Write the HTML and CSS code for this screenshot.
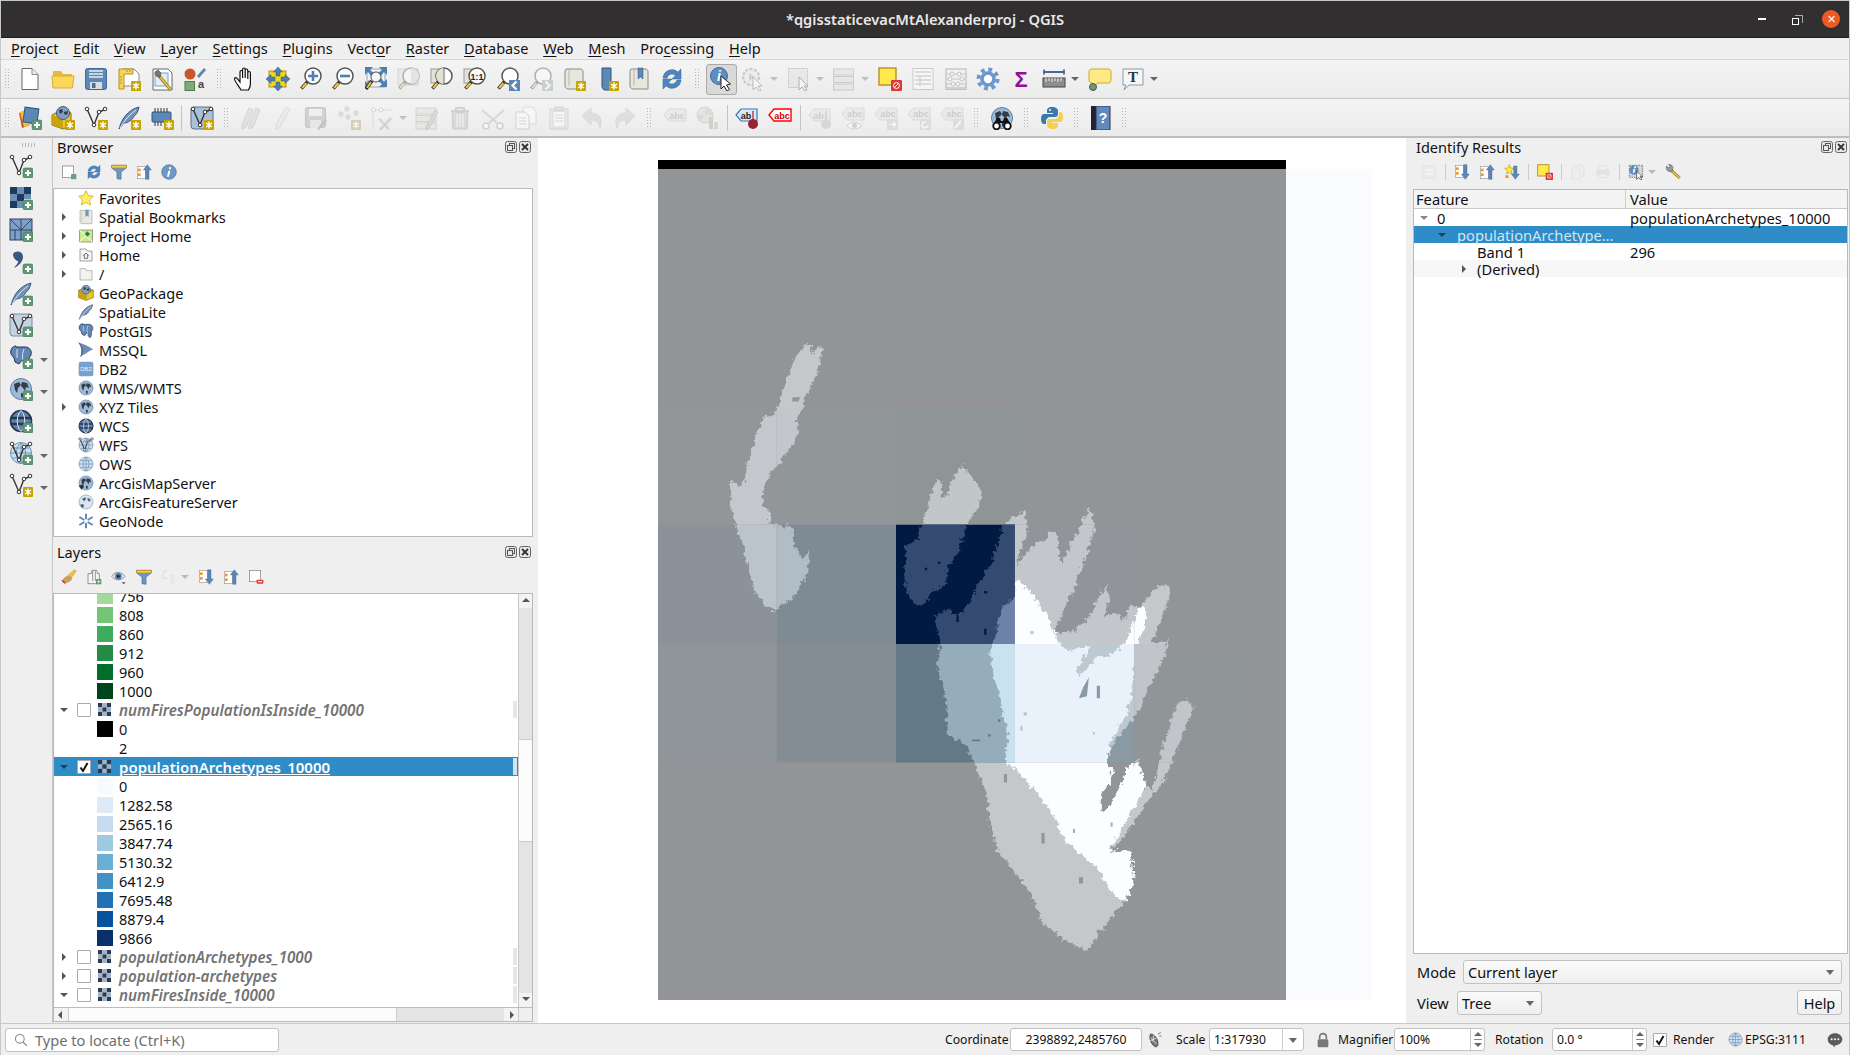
FILE: index.html
```html
<!DOCTYPE html>
<html lang="en">
<head>
<meta charset="utf-8">
<title>QGIS</title>
<link rel="stylesheet" href="styles.css">
</head>
<body>
<svg class="defs" width="0" height="0" aria-hidden="true">
<defs>
<g id="bs"><rect x="14" y="14" width="10" height="10" rx="1" fill="#c9a300"/><path d="M19 15.500v7M16 17l6 4M22 17l-6 4" stroke="#fff" stroke-width="1.500"/></g>
<g id="bp"><rect x="14" y="14" width="10" height="10" rx="2" fill="#5f9a72" stroke="#3e7a52" stroke-width=".6"/><path d="M19 16v6M16 19h6" stroke="#fff" stroke-width="2"/></g>
<g id="mag"><path d="M9 14 2.500 21.500" stroke="#111" stroke-width="3.400"/><path d="M7.500 16 3 21" stroke="#f2c438" stroke-width="2.400"/><circle cx="14" cy="9" r="8" fill="#fff" fill-opacity=".85" stroke="#555" stroke-width="1.500"/></g>
<g id="vv"><path d="M3 3l7 16 5-13 7-3" fill="none" stroke="#333" stroke-width="1.400"/><circle cx="3" cy="3" r="1.800" fill="#fff" stroke="#333"/><circle cx="10" cy="19" r="1.800" fill="#fff" stroke="#333"/><circle cx="15" cy="6" r="1.800" fill="#fff" stroke="#333"/><circle cx="21" cy="3" r="1.800" fill="#fff" stroke="#333"/></g>
<g id="glb"><circle cx="12" cy="12" r="10.500" fill="#9dbbd9" stroke="#5e7f9f"/><path d="M5 7l5-2 2 3-3 3-1 5-2-3zM13 5l5 1 2 5-3-1-1 4-2-3-2-2zM12 16l3 1-1 4-2-1z" fill="#333c48"/></g>
<g id="grid"><circle cx="12" cy="12" r="10.500" fill="#cfe0f0" stroke="#6e90b4"/><path d="M1.500 12h21M12 1.500v21M3.500 7h17M3.500 17h17M12 1.500c-6 5-6 16 0 21M12 1.500c6 5 6 16 0 21" fill="none" stroke="#6e90b4"/></g>
<g id="wcs"><circle cx="12" cy="12" r="10.500" fill="#5d82ab" stroke="#26374f" stroke-width="1.600"/><path d="M1.500 9h21M1.500 15h21" stroke="#26374f" stroke-width="2.400"/><path d="M12 1.500c-5 5-5 16 0 21M12 1.500c5 5 5 16 0 21" fill="none" stroke="#dfe8f2"/></g>
<g id="plume"><path d="M2 23C5 12 11 4 22 1c-1 5-3 8-6 10 1 1-4 6-9 6z" fill="#7492b8" stroke="#39587f"/><path d="M3 22C8 14 12 9 19 4" stroke="#dce6f2" fill="none"/></g>
<g id="eleph"><path d="M7 2h9c5 0 7 4 6 8l-2 3v6l-2 3-3-3v-4l-3 1-2 3-4-2-1-4-3-4c-1-4 1-8 5-8z" fill="#5f86b4" stroke="#26374f"/><path d="M8 4v9M15 4c-2 5-2 9 0 14" stroke="#d9e5f1" fill="none"/></g>
</defs>
<symbol id="new" viewBox="0 0 24 24"><path d="M4 1.500h10l6 6v15H4z" fill="#fff" stroke="#666"/><path d="M14 1.500v6h6" fill="#eee" stroke="#888"/></symbol>
<symbol id="open" viewBox="0 0 24 24"><path d="M2 8V4h8l2 3h9v3H2z" fill="#e7b93c"/><path d="M2 21 1 9h22l-1.500 12z" fill="#fbd75b" stroke="#d9ad30"/></symbol>
<symbol id="save" viewBox="0 0 24 24"><rect x="1.500" y="1.500" width="21" height="21" rx="2" fill="#5d87b5" stroke="#3f6a98"/><path d="M5 4h14M5 7h14M5 10h14" stroke="#e7eef5" stroke-width="1.400"/><rect x="6" y="15" width="12" height="7" fill="#d8dde2"/><rect x="8" y="16" width="3.500" height="5" fill="#4d6f94"/></symbol>
<symbol id="newlayout" viewBox="0 0 24 24"><path d="M6 2h11l5 5v12H6z" fill="#fff" stroke="#888"/><path d="M2 2h14v5H7v15H2z" fill="#f6d55c" stroke="#b98f1e"/><path d="M3 10h2M3 13h2M3 16h2M10 3v2M13 3v2" stroke="#b98f1e"/><use href="#bs"/></symbol>
<symbol id="layoutmgr" viewBox="0 0 24 24"><path d="M3 2h15l4 4v17H3z" fill="#fff" stroke="#666"/><rect x="5" y="6" width="13" height="13" fill="#e4ecf5" stroke="#7ba1c9"/><path d="M9 9l12 14" stroke="#8f7a2a" stroke-width="3.400"/><path d="M10 10l11 13" stroke="#e3c44a" stroke-width="1.800"/><path d="M5 5l3-2 3 3-1 4-4-1z" fill="#777" stroke="#444" stroke-width=".6"/></symbol>
<symbol id="stylemgr" viewBox="0 0 24 24"><circle cx="7" cy="7" r="5.500" fill="#c8552b"/><rect x="2" y="14.500" width="9.500" height="9" fill="#7fab7a" stroke="#4f7b4a"/><path d="M15 10l7-8" stroke="#5d87b5" stroke-width="2.800"/></symbol>
<symbol id="pan" viewBox="0 0 24 24"><path d="M8 23C6 19 2 15 1.500 12c0-1.800 2-1.800 3 0L7 15V5c0-2 2.600-2 2.600 0v6-8.500c0-2 2.600-2 2.600 0V11V3.500c0-2 2.600-2 2.600 0V12V6c0-2 2.600-2 2.600 0v11c0 3-1 4-2 6z" fill="#fff" stroke="#111" stroke-width="1.200"/></symbol>
<symbol id="panselect" viewBox="0 0 24 24"><rect x="3" y="4" width="17" height="16" fill="#f5d90a" stroke="#b98f1e"/><g fill="#4f7fb0" stroke="#2e5c8c" stroke-width=".5"><path d="M12 0l4.500 5H14v4h-4V5H7.500z"/><path d="M12 24l4.500-5H14v-4h-4v4H7.500z"/><path d="M0 12l5-4.500V10h4v4H5v2.500z"/><path d="M24 12l-5-4.500V10h-4v4h4v2.500z"/></g></symbol>
<symbol id="zoomin" viewBox="0 0 24 24"><use href="#mag"/><path d="M9 9h10M14 4v10" stroke="#4f7fb0" stroke-width="2.600"/></symbol>
<symbol id="zoomout" viewBox="0 0 24 24"><use href="#mag"/><path d="M9 9h10" stroke="#4f7fb0" stroke-width="2.600"/></symbol>
<symbol id="zoomfull" viewBox="0 0 24 24"><rect x="3" y="2" width="18" height="18" fill="#eef0f2" stroke="#9aa"/><g fill="#4f7fb0"><path d="M1 0h8L6 3l4 3-3 3-3-4-3 3z"/><path d="M23 0h-8l3 3-4 3 3 3 3-4 3 3z"/><path d="M23 20h-8l3-3-4-3 3-3 3 4 3-3z"/><path d="M1 20h6l-2-2 3-3-3-2-2 3-2-2z"/></g><path d="M8 14 2 22" stroke="#111" stroke-width="3.200"/><path d="M7 15l-4 6" stroke="#f2c438" stroke-width="2.200"/><circle cx="12" cy="10" r="5" fill="#fff" fill-opacity=".5" stroke="#555"/></symbol>
<symbol id="zoomlayer" viewBox="0 0 24 24"><rect x="1" y="2" width="20" height="16" fill="#e0e0d0" stroke="#aaa"/><use href="#mag"/><path d="M14 1a8 8 0 0 1 0 16z" fill="#d5d5c5"/></symbol>
<symbol id="zoomsel" viewBox="0 0 24 24"><rect x="1" y="2" width="14" height="14" fill="#e3e3d5" stroke="#999"/><use href="#mag"/><path d="M14 1a8 8 0 0 0 0 16z" fill="#e2e2d2"/><path d="M14 1v16" stroke="#777"/></symbol>
<symbol id="zoomnative" viewBox="0 0 24 24"><rect x="1" y="2" width="12" height="14" fill="#e3e3d5" stroke="#999"/><use href="#mag"/></symbol>
<symbol id="zoomlast" viewBox="0 0 24 24"><use href="#mag"/><rect x="13" y="13" width="11" height="11" fill="#5d87b5"/><path d="M20.500 14.500l-4 4 4 4" fill="none" stroke="#fff" stroke-width="2.200"/></symbol>
<symbol id="zoomnext" viewBox="0 0 24 24"><use href="#mag"/><rect x="13" y="13" width="11" height="11" fill="#8aa"/><path d="M16.500 14.500l4 4-4 4" fill="none" stroke="#fff" stroke-width="2.200"/></symbol>
<symbol id="bmnew" viewBox="0 0 24 24"><path d="M4 2h14c2 0 3 1 3 3v17H7c-2 0-4-1-4-3V4z" fill="#e8e6dd" stroke="#8a8a86"/><path d="M7 2v17" stroke="#b8b8b0"/><use href="#bs"/></symbol>
<symbol id="bmshow" viewBox="0 0 24 24"><path d="M7 1h9v16l7 6H10c-2 0-3-2-3-4z" fill="#5d87b5" stroke="#2f5480"/><use href="#bs"/></symbol>
<symbol id="bm" viewBox="0 0 24 24"><path d="M4 2h14c2 0 3 1 3 3v17H7c-2 0-4-1-4-3V4z" fill="#e8e6dd" stroke="#8a8a86"/><path d="M7 2v17" stroke="#b8b8b0"/><path d="M11 1h5v11l-2.500-2L11 12z" fill="#5d87b5" stroke="#2f5480" stroke-width=".5"/></symbol>
<symbol id="refresh" viewBox="0 0 24 24"><path d="M3 11a9 9 0 0 1 15-6l3-3v10h-9l3.500-3.500A5 5 0 0 0 7 11z" fill="#4f86c0" stroke="#2f6296" stroke-width=".5"/><path d="M21 13a9 9 0 0 1-15 6l-3 3V12h9l-3.500 3.500A5 5 0 0 0 17 13z" fill="#4f86c0" stroke="#2f6296" stroke-width=".5"/></symbol>
<symbol id="identify" viewBox="0 0 24 24"><circle cx="10" cy="9" r="8.500" fill="#5b8ec4" stroke="#3f6e9e"/></symbol>
<symbol id="cursor" viewBox="0 0 24 24"><path d="M12 9v13l3-3 3 5 2.500-1.500-3-4.500 4-1z" fill="#fff" stroke="#222"/></symbol>
<symbol id="selrun" viewBox="0 0 24 24"><circle cx="10" cy="10" r="8" fill="#e8e8e0" stroke="#999" stroke-width="2.400" stroke-dasharray="3 1.500"/><path d="M8 6l6 4-6 4z" fill="#aaa"/><path d="M12 10v13l3-3 3 4 2-1-3-4h4z" fill="#fff" stroke="#777"/></symbol>
<symbol id="select" viewBox="0 0 24 24"><rect x="1.500" y="1.500" width="19" height="19" fill="#deded0" stroke="#888" stroke-dasharray="2 1"/><path d="M12 10v13l3-3 3 4 2-1-3-4h4z" fill="#fff" stroke="#555"/></symbol>
<symbol id="table" viewBox="0 0 24 24"><g fill="#dfdfcb" stroke="#999"><rect x="1.500" y="2" width="20" height="6"/><rect x="1.500" y="9.500" width="20" height="6"/><rect x="1.500" y="17" width="20" height="6"/></g></symbol>
<symbol id="deselect" viewBox="0 0 24 24"><rect x="1" y="1" width="17" height="17" fill="#ffe94d" stroke="#b98f1e" stroke-width="1.400"/><rect x="13" y="13" width="11" height="11" rx="1" fill="#d73b3b"/><circle cx="18.500" cy="18.500" r="3" fill="none" stroke="#fff"/><path d="M16.500 20.500l4-4" stroke="#fff"/></symbol>
<symbol id="attrtable" viewBox="0 0 24 24"><rect x="2" y="1.500" width="20" height="21" fill="#fff" stroke="#999"/><path d="M4 5h16M4 9h16M4 13h16M4 17h16M9 9v10" stroke="#aaa" stroke-width="1.500"/></symbol>
<symbol id="abacus" viewBox="0 0 24 24"><rect x="2" y="2" width="20" height="19" fill="none" stroke="#888" stroke-width="1.400"/><path d="M1 22.500h22M3 7h18M3 12h18M3 17h18" stroke="#888"/><g fill="#fff" stroke="#888"><circle cx="8" cy="7" r="2"/><circle cx="15" cy="7" r="2"/><circle cx="6" cy="12" r="2"/><circle cx="18" cy="12" r="2"/><circle cx="9" cy="17" r="2"/><circle cx="14" cy="17" r="2"/></g></symbol>
<symbol id="gear" viewBox="0 0 24 24"><circle cx="12" cy="12" r="9.500" fill="none" stroke="#6d97d0" stroke-width="4" stroke-dasharray="3.800 3.660"/><circle cx="12" cy="12" r="6" fill="#fff" stroke="#6d97d0" stroke-width="3.600"/></symbol>
<symbol id="ruler" viewBox="0 0 24 24"><path d="M2 5h20M2 2.500v5M22 2.500v5" stroke="#466a94" stroke-width="1.800"/><rect x="1" y="11" width="22" height="9" fill="#8e8e8e" stroke="#444"/><path d="M4 11v4M7 11v3M10 11v4M13 11v3M16 11v4M19 11v3" stroke="#eee"/></symbol>
<symbol id="tip" viewBox="0 0 24 24"><path d="M4 2h16c2 0 3 1 3 3v7c0 3-1 4-3 4H10l-5 4v-4H4c-2 0-3-1-3-4V5c0-2 1-3 3-3z" fill="#ffe985" stroke="#cda92a"/><circle cx="5" cy="20" r="3.500" fill="#6f9a6a" stroke="#456"/></symbol>
<symbol id="textann" viewBox="0 0 24 24"><path d="M2 2h20v16H8l-5 5 2-5H2z" fill="#f4f7fa" stroke="#8a9aaa"/></symbol>
<symbol id="dsm" viewBox="0 0 24 24"><path d="M1 7l8-3 3 15-8 3z" fill="#c9562b"/><path d="M2 6l10-4 4 15-10 4z" fill="#f0c23c"/><rect x="6" y="2" width="14" height="15" fill="#5d87b5" stroke="#2f5480" transform="rotate(8 13 9)"/><use href="#bp"/></symbol>
<symbol id="gpkg" viewBox="0 0 24 24"><path d="M1 8l11-5 11 5v11l-11 4-11-4z" fill="#e9c62c" stroke="#7c6a10"/><path d="M1 8l11 5 11-5M12 13v10" fill="none" stroke="#7c6a10"/><path d="M1 8v11l11 4V13z" fill="#c9a30c"/><circle cx="12" cy="7" r="6.500" fill="#7f9fc4" stroke="#3f5a7a"/><path d="M8 4l3-1 1 3-3 2zM13 6l4-1-1 4-3-1z" fill="#333c48"/></symbol>
<symbol id="gpkgb" viewBox="0 0 24 24"><path d="M1 9l11-6 8 4v12l-8 4-11-4z" fill="#e9c62c" stroke="#7c6a10"/><path d="M1 9v10l11 4V13z" fill="#c9a30c"/><circle cx="12" cy="7" r="6.500" fill="#7f9fc4" stroke="#3f5a7a"/><path d="M8 4l3-1 1 3-3 2zM13 6l4-1-1 4-3-1z" fill="#333c48"/><use href="#bs"/></symbol>
<symbol id="vstar" viewBox="0 0 24 24"><use href="#vv"/><use href="#bs"/></symbol>
<symbol id="featherb" viewBox="0 0 24 24"><use href="#plume"/><use href="#bs"/></symbol>
<symbol id="feather" viewBox="0 0 24 24"><use href="#plume"/></symbol>
<symbol id="chip" viewBox="0 0 24 24"><rect x="2" y="6" width="19" height="10" rx="1" fill="#5d87b5" stroke="#2f5480"/><path d="M5 2v4M8 2v4M11 2v4M14 2v4M17 2v4M5 16v4M8 16v4M11 16v4" stroke="#333"/><use href="#bs"/></symbol>
<symbol id="vedit" viewBox="0 0 24 24"><rect x="1" y="1" width="22" height="22" rx="3" fill="#a9c0da" stroke="#5c6f85"/><use href="#vv"/><use href="#bs"/></symbol>
<symbol id="pencils" viewBox="0 0 24 24"><path d="M3 19 10 2l4 2-7 17-4 2zM10 19 17 2l4 2-7 17-4 2z" fill="#cfcfc6" stroke="#aaa"/></symbol>
<symbol id="pencil" viewBox="0 0 24 24"><path d="M5 19 15 1l4 2-10 18-4 3z" fill="#e4e4da" stroke="#bbb"/></symbol>
<symbol id="saveedit" viewBox="0 0 24 24"><rect x="1.500" y="1.500" width="20" height="20" rx="2" fill="#aaa9a0" stroke="#8a8a82"/><rect x="5" y="3" width="13" height="7" fill="#eee"/><rect x="6" y="14" width="11" height="8" fill="#ddd"/><path d="M13 23l8-10 2 2-8 9z" fill="#8a8a82"/></symbol>
<symbol id="points" viewBox="0 0 24 24"><g fill="#bdbdb5"><circle cx="10" cy="3" r="2.700"/><circle cx="4" cy="8" r="2.700"/><circle cx="19" cy="7" r="2.700"/><circle cx="11" cy="11" r="2.700"/></g><use href="#bs"/></symbol>
<symbol id="tool" viewBox="0 0 24 24"><path d="M3 4h18M3 4v19" stroke="#bbb"/><circle cx="3.500" cy="4" r="2" fill="#fff" stroke="#aaa"/><circle cx="11" cy="4" r="2" fill="#fff" stroke="#aaa"/><path d="M9 23l11-12 2 2-11 12zM10 12l10 11-2 1-10-11z" fill="#b0b0a8"/></symbol>
<symbol id="tablepen" viewBox="0 0 24 24"><g fill="#dfdfcb" stroke="#aaa"><rect x="1" y="2" width="20" height="6"/><rect x="1" y="9.500" width="20" height="6"/><rect x="1" y="17" width="20" height="6"/></g><path d="M11 21l9-17 3 2-9 16-3 2z" fill="#bbb" stroke="#999"/></symbol>
<symbol id="trash" viewBox="0 0 24 24"><path d="M3 5h18M8 5V2h8v3" fill="none" stroke="#b5a5a0" stroke-width="2"/><path d="M4 6h16l-1 17H5z" fill="#cbbab5" stroke="#a89890"/><path d="M9 8v13M12 8v13M15 8v13" stroke="#eee" stroke-width="1.500"/></symbol>
<symbol id="scissors" viewBox="0 0 24 24"><path d="M1 4l15 13M23 4 8 17" stroke="#b5b5ad" stroke-width="2"/><circle cx="5" cy="20" r="3" fill="#fff" stroke="#aaa" stroke-width="1.500"/><circle cx="19" cy="20" r="3" fill="#fff" stroke="#aaa" stroke-width="1.500"/></symbol>
<symbol id="copy" viewBox="0 0 24 24"><path d="M9 1h9l4 4v13H9z" fill="#fff" stroke="#bbb"/><path d="M2 6h9l4 4v13H2z" fill="#fff" stroke="#aaa"/><path d="M5 12h7M5 15h7M5 18h7" stroke="#bbb"/></symbol>
<symbol id="paste" viewBox="0 0 24 24"><rect x="3" y="3" width="18" height="20" fill="#e4e4da" stroke="#aaa"/><rect x="6" y="5" width="12" height="16" fill="#fff" stroke="#bbb"/><path d="M8 9h8M8 12h8M8 15h8" stroke="#bbb"/><rect x="8" y="1" width="8" height="4" fill="#ccc" stroke="#aaa"/></symbol>
<symbol id="undo" viewBox="0 0 24 24"><path d="M2 10l9-8v5c9 0 12 6 9 15-2-7-4-8-9-8v5z" fill="#c9c9c1" stroke="#bbb"/></symbol>
<symbol id="redo" viewBox="0 0 24 24"><path d="M22 10l-9-8v5C4 7 1 13 4 22c2-7 4-8 9-8v5z" fill="#c9c9c1" stroke="#bbb"/></symbol>
<symbol id="tagoff" viewBox="0 0 24 24"><path d="M1 9l5-6h17v12H6z" fill="#e2e2d6" stroke="#bbb"/></symbol>
<symbol id="pie" viewBox="0 0 24 24"><circle cx="9" cy="9" r="8" fill="#d8d5c0" stroke="#aaa"/><path d="M9 9V1a8 8 0 0 1 8 8z" fill="#d7b7b3"/><path d="M9 9H1a8 8 0 0 0 3 6z" fill="#a9c7b3"/><rect x="13" y="11" width="4" height="12" fill="#a0a8a0"/><rect x="18" y="16" width="4" height="7" fill="#c5b5b0"/></symbol>
<symbol id="abpin" viewBox="0 0 24 24"><path d="M1 9l5-6h16v12H6z" fill="#dbe8f5" stroke="#3a78c0" stroke-width="1.200"/><path d="M18 6v10" stroke="#fff" stroke-width="2.400"/><circle cx="18" cy="18" r="5" fill="#9a2330"/><path d="M18 5v9" stroke="#9a2330" stroke-width="1.300"/></symbol>
<symbol id="abcred" viewBox="0 0 24 24"><path d="M1 9l5-6h17v12H6z" fill="#fff" stroke="#f00" stroke-width="1.400"/></symbol>
<symbol id="abpinoff" viewBox="0 0 24 24"><path d="M1 9l5-6h16v12H6z" fill="#e2e2d6" stroke="#bbb"/><circle cx="18" cy="18" r="5" fill="#bfb5b5"/><path d="M18 5v9" stroke="#bfb5b5" stroke-width="2"/></symbol>
<symbol id="abceye" viewBox="0 0 24 24"><path d="M1 8l5-6h17v12H6z" fill="#e2e2d6" stroke="#bbb"/><path d="M6 20c4-5 10-5 15 0-5 4-11 4-15 0z" fill="#fff" stroke="#aaa"/><circle cx="13.500" cy="19.500" r="2.500" fill="#aaa"/></symbol>
<symbol id="abcarrow" viewBox="0 0 24 24"><path d="M1 8l5-6h17v12H6z" fill="#e2e2d6" stroke="#bbb"/><rect x="13" y="13" width="11" height="11" rx="1" fill="#c4c4bc"/><path d="M15 18h4v-3l4 3.500-4 3.500v-3h-4z" fill="#fff"/></symbol>
<symbol id="abcrot" viewBox="0 0 24 24"><path d="M1 8l5-6h17v12H6z" fill="#e2e2d6" stroke="#bbb"/><rect x="13" y="13" width="11" height="11" rx="1" fill="#c4c4bc"/><path d="M21 19a3 3 0 1 1-2-3" fill="none" stroke="#fff" stroke-width="1.800"/></symbol>
<symbol id="abcedit" viewBox="0 0 24 24"><path d="M1 8l5-6h17v12H6z" fill="#e2e2d6" stroke="#bbb"/><rect x="13" y="13" width="11" height="11" rx="1" fill="#c4c4bc"/><path d="M15 22l6-7" stroke="#fff" stroke-width="2"/></symbol>
<symbol id="globebin" viewBox="0 0 24 24"><use href="#glb"/><path d="M4 17l3-5h3l1 3h2l1-3h3l3 5z" fill="#111"/><circle cx="6.500" cy="20" r="3.300" fill="#fff" stroke="#111" stroke-width="1.800"/><circle cx="17.500" cy="20" r="3.300" fill="#fff" stroke="#111" stroke-width="1.800"/></symbol>
<symbol id="python" viewBox="0 0 24 24"><path d="M12 1C8 1 7 3 7 5v2h6v1H4C2 8 1 10 1 13s1 5 3 5h2v-3c0-2 2-4 4-4h5c2 0 3-1 3-3V5c0-2-2-4-6-4z" fill="#3d78a8"/><path d="M13 23c4 0 5-2 5-4v-2h-6v-1h8c2 0 3-2 3-5s-1-5-3-5h-1v3c0 2-2 4-4 4h-5c-2 0-3 1-3 3v3c0 2 2 4 6 4z" fill="#f5d04a"/><circle cx="10" cy="4" r="1" fill="#fff"/></symbol>
<symbol id="helpbook" viewBox="0 0 24 24"><rect x="3" y="0" width="5" height="24" fill="#223"/><rect x="8" y="0" width="14" height="24" fill="#5f8ac0" stroke="#334"/></symbol>
<symbol id="vadd" viewBox="0 0 24 24"><use href="#vv"/><use href="#bp"/></symbol>
<symbol id="rasteradd" viewBox="0 0 24 24"><path d="M1 1h7v7H1zM8 8h7v7H8zM1 15h7v7H1zM15 1h7v7h-7z" fill="#1f3a5f"/><path d="M8 1h7v7H8zM1 8h7v7H1zM8 15h6v7H8zM15 8h7v5h-7z" fill="#6d8fb5"/><use href="#bp"/></symbol>
<symbol id="meshadd" viewBox="0 0 24 24"><rect x="1" y="1" width="22" height="21" fill="#7da0c6" stroke="#2f4560"/><path d="M1 12h22M12 1v21M1 1l11 11M23 1 12 12M6 12v10" stroke="#2f4560" fill="none"/><use href="#bp"/></symbol>
<symbol id="commaadd" viewBox="0 0 24 24"><path d="M4 4c3-4 10-3 10 3 0 5-5 9-9 11 2-3 5-5 4-7-2 0-5-3-5-7z" fill="#39587f"/><use href="#bp"/></symbol>
<symbol id="featheradd" viewBox="0 0 24 24"><use href="#plume"/><use href="#bp"/></symbol>
<symbol id="veditadd" viewBox="0 0 24 24"><rect x="1" y="1" width="22" height="22" rx="3" fill="#c3d3e4" stroke="#7a8b9f"/><use href="#vv"/><use href="#bp"/></symbol>
<symbol id="pgadd" viewBox="0 0 24 24"><use href="#eleph"/><use href="#bp"/></symbol>
<symbol id="elephant" viewBox="0 0 24 24"><use href="#eleph"/></symbol>
<symbol id="wmsadd" viewBox="0 0 24 24"><use href="#glb"/><use href="#bp"/></symbol>
<symbol id="globe" viewBox="0 0 24 24"><use href="#glb"/></symbol>
<symbol id="wcsadd" viewBox="0 0 24 24"><use href="#wcs"/><use href="#bp"/></symbol>
<symbol id="wcsi" viewBox="0 0 24 24"><use href="#wcs"/></symbol>
<symbol id="wfsadd" viewBox="0 0 24 24"><use href="#grid"/><use href="#vv"/><use href="#bp"/></symbol>
<symbol id="wfsi" viewBox="0 0 24 24"><use href="#grid"/><use href="#vv"/></symbol>
<symbol id="ows" viewBox="0 0 24 24"><use href="#grid"/></symbol>
<symbol id="arcm" viewBox="0 0 24 24"><use href="#glb"/><path d="M1 16l6-2 2 4-4 4z" fill="#333"/></symbol>
<symbol id="arcf" viewBox="0 0 24 24"><circle cx="12" cy="12" r="10.500" fill="#dbe6f1" stroke="#7f9fc0"/><path d="M6 7l5-2 1 3-3 3zM14 6l4 1 1 4-4 0zM3 16l5-1 1 4-3 2z" fill="#555f6c"/></symbol>
<symbol id="geonode" viewBox="0 0 24 24"><path d="M12 1v22M2 6l20 12M22 6 2 18" stroke="#6088b5" stroke-width="3"/><circle cx="12" cy="12" r="3" fill="#fff"/></symbol>
<symbol id="vnew" viewBox="0 0 24 24"><use href="#vv"/><use href="#bs"/></symbol>
<symbol id="star" viewBox="0 0 24 24"><path d="M12 1l3.400 7.400 7.600.9-5.600 5.400 1.500 7.800L12 18.600l-6.900 3.900 1.500-7.800L1 9.300l7.600-.9z" fill="#fdf06a" stroke="#d4a71e" stroke-width="1.200"/></symbol>
<symbol id="bmsmall" viewBox="0 0 24 24"><path d="M3 2h17c1 0 1 1 1 2v18H6c-2 0-3-1-3-3z" fill="#eaeae2" stroke="#a8a8a0"/><path d="M6 2v18" stroke="#c5c5bd"/><path d="M11 1h5v11l-2.500-2L11 12z" fill="#6d97c4"/></symbol>
<symbol id="projhome" viewBox="0 0 24 24"><rect x="2" y="3" width="20" height="18" fill="#cdea8a" stroke="#777"/><path d="M2 3l20 18M2 21 14 10" stroke="#fff" stroke-width="1.500"/><path d="M14 5l4 4-4 4-4-4z" fill="#1f8a3a"/></symbol>
<symbol id="homeic" viewBox="0 0 24 24"><path d="M3 21V3h9l2 3h7v15z" fill="#f5f5f5" stroke="#777"/><path d="M8 13l4-4 4 4M9.500 12v5h5v-5" fill="none" stroke="#333"/></symbol>
<symbol id="folderic" viewBox="0 0 24 24"><path d="M3 21V4h8l2 3h8v14z" fill="#f2f2f0" stroke="#999"/></symbol>
<symbol id="mssql" viewBox="0 0 24 24"><path d="M1 1c5 1 15 5 22 10-6 2-10 6-19 11 2-7 1-15-3-21z" fill="#6d8fb5"/><path d="M1 1c5 5 8 11 3 21" fill="none" stroke="#39587f" stroke-width="1.500"/></symbol>
<symbol id="db2" viewBox="0 0 24 24"><rect x="1" y="1" width="22" height="22" rx="3" fill="#76a0d0"/></symbol>
<symbol id="addrect" viewBox="0 0 24 24"><rect x="2" y="3" width="17" height="17" fill="#fff" stroke="#777"/><rect x="15" y="15" width="8" height="8" rx="1" fill="#6aa07a"/></symbol>
<symbol id="filter" viewBox="0 0 24 24"><path d="M1 2h22v4l-8 6v11l-6-1V12L1 6z" fill="#6d97c4" stroke="#3f6a98"/><path d="M1 2h22v4H1z" fill="#f2c94c" stroke="#b98f1e"/></symbol>
<symbol id="collapse" viewBox="0 0 24 24"><rect x="2" y="4" width="12" height="18" fill="#fff" stroke="#999"/><rect x="3" y="7" width="4" height="4" fill="#ef9a2a"/><rect x="3" y="14" width="4" height="4" fill="#ef9a2a"/><path d="M17 1l6 8h-3.500v14h-5V9H11z" fill="#5d87b5" stroke="#2f5480" stroke-width=".5"/></symbol>
<symbol id="expand" viewBox="0 0 24 24"><rect x="2" y="2" width="12" height="18" fill="#fff" stroke="#999"/><rect x="3" y="5" width="4" height="4" fill="#ef9a2a"/><rect x="3" y="12" width="4" height="4" fill="#ef9a2a"/><path d="M17 23l6-8h-3.500V1h-5v14H11z" fill="#5d87b5" stroke="#2f5480" stroke-width=".5"/></symbol>
<symbol id="starexp" viewBox="0 0 24 24"><path d="M8 1l2 5 5 .5-4 3.500 1 5-4-2.500L4 15l1-5-4-3.500L6 6z" fill="#fce94f" stroke="#c4a000"/><path d="M17 23l6-8h-3.500V3h-5v12H11z" fill="#5d87b5" stroke="#2f5480" stroke-width=".5"/><rect x="2" y="17" width="5" height="4" fill="#ef9a2a"/></symbol>
<symbol id="info" viewBox="0 0 24 24"><circle cx="12" cy="12" r="11" fill="#6d97c4" stroke="#4d7aa8"/><path d="M11 10h3l-2 9h-3zM12 5h3v3h-3z" fill="#fff"/></symbol>
<symbol id="brush" viewBox="0 0 24 24"><path d="M10 10l10-9 3 2-8 11z" fill="#f0c23c" stroke="#a88a10" stroke-width=".6"/><path d="M2 17c2-5 8-9 12-6l3 3c-1 4-7 7-11 8z" fill="#c9a060"/><path d="M1 16c3 1 5 3 6 6l-3-1-3-3z" fill="#d0342c"/></symbol>
<symbol id="addgroup" viewBox="0 0 24 24"><path d="M3 7h5l1-5h7l1 5h3v15H3z" fill="#f4f4f4" stroke="#666"/><path d="M10 3v15M14 3v15" stroke="#666"/><rect x="15" y="15" width="8" height="8" rx="1" fill="#5f9a72"/><path d="M19 16.500v5M16.500 19h5" stroke="#fff"/></symbol>
<symbol id="eye" viewBox="0 0 24 24"><path d="M1 11c5-8 14-8 20 0-5 7-15 7-20 0z" fill="#e4e8ee" stroke="#667"/><circle cx="11" cy="11" r="5" fill="#4d7aa8"/><circle cx="11" cy="11" r="2" fill="#223"/><path d="M16 20h6l-3 3z" fill="#555"/></symbol>
<symbol id="epsilon" viewBox="0 0 24 24"><path d="M9 3C5 2 3 4 4 7c-3 2-2 7 2 7 1 0 2 0 3-1" fill="none" stroke="#aaa" stroke-width="1.500"/><path d="M13 10h3v11h-3M20 10h-3v11h3" fill="none" stroke="#bbb"/><rect x="14" y="14" width="7" height="8" fill="#ddd"/></symbol>
<symbol id="removerect" viewBox="0 0 24 24"><rect x="2" y="2" width="17" height="17" fill="#fff" stroke="#777"/><rect x="13" y="16" width="10" height="6" rx="1" fill="#e04040"/><path d="M15 19h6" stroke="#fff" stroke-width="1.500"/></symbol>
<symbol id="treeform" viewBox="0 0 24 24"><rect x="2" y="3" width="20" height="18" rx="1" fill="#e8e8e8" stroke="#ccc"/><path d="M6 9h12M6 15h12" stroke="#fff" stroke-width="2.500"/></symbol>
<symbol id="copyd" viewBox="0 0 24 24"><path d="M9 2h8l4 4v12H9z" fill="#eee" stroke="#ccc"/><path d="M3 6h8l4 4v12H3z" fill="#eee" stroke="#ccc"/></symbol>
<symbol id="printer" viewBox="0 0 24 24"><rect x="6" y="3" width="12" height="6" fill="#f2f2f2" stroke="#ccc"/><rect x="2" y="8" width="20" height="10" rx="2" fill="#d8d8d8"/><rect x="6" y="15" width="12" height="5" fill="#f2f2f2" stroke="#ccc"/></symbol>
<symbol id="idsel" viewBox="0 0 24 24"><rect x="2" y="2" width="20" height="18" fill="#d5d5d5" stroke="#444" stroke-dasharray="2 1.500"/><circle cx="9" cy="9" r="7" fill="#5b8ec4"/><path d="M8.500 7h2.500l-1.500 6H7zM9.500 3.500H12V6H9.500z" fill="#fff"/><path d="M13 11v12l3-3 3 4 2-1-3-4h4z" fill="#fff" stroke="#333"/></symbol>
<symbol id="wrench" viewBox="0 0 24 24"><path d="M9 9l13 12" stroke="#8f7a2a" stroke-width="4.400"/><path d="M10 10l12 11" stroke="#e3c44a" stroke-width="2.400"/><path d="M2 3l4 3 2-3-3-2c3-1 7 1 7 5l-1 2 1 2-3 2-3-1C4 11 1 8 2 3z" fill="#999" stroke="#444" stroke-width=".7"/></symbol>
<symbol id="nocrs" viewBox="0 0 24 24"><path d="M7 3c6 0 11 8 11 14s-3 6-6 4S3 9 7 3z" fill="#777" stroke="#222"/><path d="M6 8l10 10M12 4l-2 10M4 14l12-5" stroke="#fff"/><path d="M18 3l4-2M20 6l3 0" stroke="#333"/></symbol>
<symbol id="lock" viewBox="0 0 24 24"><path d="M7 11V7c0-6 10-6 10 0v4" fill="none" stroke="#777" stroke-width="2.400"/><rect x="4" y="11" width="16" height="12" rx="2" fill="#777"/></symbol>
<symbol id="crs" viewBox="0 0 24 24"><use href="#grid"/></symbol>
<symbol id="msg" viewBox="0 0 24 24"><path d="M12 2c6 0 11 4 11 9s-5 9-11 9l-1 3c-1-1-2-2-2-3-4-1-8-4-8-9s5-9 11-9z" fill="#5b5b5b"/><circle cx="7" cy="11" r="1.500" fill="#fff"/><circle cx="12" cy="11" r="1.500" fill="#fff"/><circle cx="17" cy="11" r="1.500" fill="#fff"/></symbol>
<symbol id="search" viewBox="0 0 24 24"><circle cx="10" cy="10" r="7.500" fill="none" stroke="#888" stroke-width="1.800"/><path d="M15.500 15.500 22 22" stroke="#888" stroke-width="2.200"/></symbol>
<symbol id="dockfloat" viewBox="0 0 12 12"><rect x=".5" y=".5" width="11" height="11" rx="2" fill="#e8e8e8" stroke="#666"/><rect x="4.500" y="2.500" width="5" height="5" fill="none" stroke="#555"/><rect x="2.500" y="4.500" width="5" height="5" fill="#e8e8e8" stroke="#555"/></symbol>
<symbol id="dockclose" viewBox="0 0 12 12"><rect x=".5" y=".5" width="11" height="11" rx="2" fill="#e8e8e8" stroke="#666"/><path d="M3 3l6 6M9 3l-6 6" stroke="#333" stroke-width="1.800"/></symbol>
<symbol id="check" viewBox="0 0 12 12"><path d="M2.500 6.500 5 10l4.500-8" fill="none" stroke="#111" stroke-width="2"/></symbol>
<symbol id="layerico" viewBox="0 0 13 13"><path d="M0 0h4.300v4.300H0zM4.300 4.300h4.400v4.400H4.300zM0 8.700h4.300V13H0zM8.700 0H13v4.300H8.700zM8.700 8.700H13V13H8.700z" fill="#2b3a52"/><path d="M4.300 0h4.400v4.300H4.300zM0 4.300h4.300v4.400H0zM8.700 4.300H13v4.400H8.700zM4.300 8.700h4.400V13H4.300z" fill="#9fb2c8"/></symbol>
</svg>

<div class="app">
  <header class="titlebar">
    <div class="title">*qgisstaticevacMtAlexanderproj - QGIS</div>
    <div class="winctl">
      <span class="win-min"></span>
      <span class="win-max"><i></i></span>
      <span class="win-close">✕</span>
    </div>
  </header>
  <nav class="menubar">
    <span><u>P</u>roject</span><span><u>E</u>dit</span><span><u>V</u>iew</span><span><u>L</u>ayer</span><span><u>S</u>ettings</span><span><u>P</u>lugins</span><span>Vect<u>o</u>r</span><span><u>R</u>aster</span><span><u>D</u>atabase</span><span><u>W</u>eb</span><span><u>M</u>esh</span><span>Pro<u>c</u>essing</span><span><u>H</u>elp</span>
  </nav>
  <div class="toolbar t1">
    <i class="grip g13"></i>
    <b class="tb"><svg><use href="#new"/></svg></b><b class="tb"><svg><use href="#open"/></svg></b><b class="tb"><svg><use href="#save"/></svg></b><b class="tb"><svg><use href="#newlayout"/></svg></b><b class="tb"><svg><use href="#layoutmgr"/></svg></b><b class="tb"><svg viewBox="0 0 24 24"><use href="#stylemgr"/><text x="15" y="21" class="ss" font-size="11" fill="#444">a</text></svg></b>
    <i class="grip"></i>
    <b class="tb"><svg><use href="#pan"/></svg></b><b class="tb"><svg><use href="#panselect"/></svg></b><b class="tb"><svg><use href="#zoomin"/></svg></b><b class="tb"><svg><use href="#zoomout"/></svg></b><b class="tb"><svg><use href="#zoomfull"/></svg></b><b class="tb off"><svg><use href="#zoomlayer"/></svg></b><b class="tb"><svg><use href="#zoomsel"/></svg></b><b class="tb"><svg viewBox="0 0 24 24"><use href="#zoomnative"/><text x="14" y="12.500" text-anchor="middle" class="ss b" font-size="9" fill="#222">1:1</text></svg></b><b class="tb"><svg><use href="#zoomlast"/></svg></b><b class="tb off"><svg><use href="#zoomnext"/></svg></b><b class="tb"><svg><use href="#bmnew"/></svg></b><b class="tb"><svg><use href="#bmshow"/></svg></b><b class="tb"><svg><use href="#bm"/></svg></b><b class="tb"><svg><use href="#refresh"/></svg></b>
    <i class="grip"></i>
    <b class="tb active"><svg viewBox="0 0 24 24"><use href="#identify"/><text x="10" y="14" text-anchor="middle" class="ss b" font-size="14" font-style="italic" fill="#fff">i</text><use href="#cursor"/></svg></b>
    <b class="tb drop off"><svg><use href="#selrun"/></svg><em></em></b>
    <b class="tb drop off"><svg><use href="#select"/></svg><em></em></b>
    <b class="tb drop off"><svg><use href="#table"/></svg><em></em></b>
    <b class="tb"><svg><use href="#deselect"/></svg></b><b class="tb off"><svg><use href="#attrtable"/></svg></b><b class="tb off"><svg><use href="#abacus"/></svg></b><b class="tb"><svg><use href="#gear"/></svg></b><b class="tb"><svg viewBox="0 0 24 24"><text x="12" y="20" text-anchor="middle" class="ss b" font-size="22" fill="#930f98">Σ</text></svg></b>
    <b class="tb drop"><svg><use href="#ruler"/></svg><em></em></b>
    <b class="tb"><svg><use href="#tip"/></svg></b>
    <b class="tb drop"><svg viewBox="0 0 24 24"><use href="#textann"/><text x="12" y="15" text-anchor="middle" class="se b" font-size="15" fill="#333">T</text></svg><em></em></b>
  </div>
  <div class="toolbar t2">
    <i class="grip g13"></i>
    <b class="tb"><svg><use href="#dsm"/></svg></b><b class="tb"><svg><use href="#gpkgb"/></svg></b><b class="tb"><svg><use href="#vstar"/></svg></b><b class="tb"><svg><use href="#featherb"/></svg></b><b class="tb"><svg><use href="#chip"/></svg></b>
    <i class="sep"></i>
    <b class="tb"><svg><use href="#vedit"/></svg></b>
    <i class="grip"></i>
    <b class="tb narrow off"><svg><use href="#pencils"/></svg></b><b class="tb off"><svg><use href="#pencil"/></svg></b><b class="tb off"><svg><use href="#saveedit"/></svg></b><b class="tb off"><svg><use href="#points"/></svg></b>
    <b class="tb drop off"><svg><use href="#tool"/></svg><em></em></b>
    <b class="tb off"><svg><use href="#tablepen"/></svg></b><b class="tb off"><svg><use href="#trash"/></svg></b><b class="tb off"><svg><use href="#scissors"/></svg></b><b class="tb off"><svg><use href="#copy"/></svg></b><b class="tb off"><svg><use href="#paste"/></svg></b><b class="tb off"><svg><use href="#undo"/></svg></b><b class="tb off"><svg><use href="#redo"/></svg></b>
    <i class="grip"></i>
    <b class="tb off"><svg viewBox="0 0 24 24"><use href="#tagoff"/><text x="14" y="12.500" text-anchor="middle" class="ss b" font-size="9" fill="#999">abc</text></svg></b><b class="tb off"><svg><use href="#pie"/></svg></b>
    <i class="sep"></i>
    <b class="tb"><svg viewBox="0 0 24 24"><use href="#abpin"/><text x="11" y="12.500" text-anchor="middle" class="ss b" font-size="9" fill="#222">ab</text></svg></b><b class="tb"><svg viewBox="0 0 24 24"><use href="#abcred"/><text x="14" y="12.500" text-anchor="middle" class="ss b" font-size="9" fill="#c00">abc</text></svg></b>
    <i class="sep"></i>
    <b class="tb off"><svg viewBox="0 0 24 24"><use href="#abpinoff"/><text x="10.500" y="12.500" text-anchor="middle" class="ss b" font-size="9" fill="#999">ab</text></svg></b><b class="tb off"><svg viewBox="0 0 24 24"><use href="#abceye"/><text x="14" y="11" text-anchor="middle" class="ss b" font-size="9" fill="#999">abc</text></svg></b><b class="tb off"><svg viewBox="0 0 24 24"><use href="#abcarrow"/><text x="14" y="11" text-anchor="middle" class="ss b" font-size="9" fill="#999">abc</text></svg></b><b class="tb off"><svg viewBox="0 0 24 24"><use href="#abcrot"/><text x="14" y="11" text-anchor="middle" class="ss b" font-size="9" fill="#999">abc</text></svg></b><b class="tb off"><svg viewBox="0 0 24 24"><use href="#abcedit"/><text x="14" y="11" text-anchor="middle" class="ss b" font-size="9" fill="#999">abc</text></svg></b>
    <i class="grip"></i>
    <b class="tb"><svg><use href="#globebin"/></svg></b>
    <i class="grip"></i>
    <b class="tb"><svg><use href="#python"/></svg></b>
    <i class="grip g15"></i>
    <b class="tb"><svg viewBox="0 0 24 24"><use href="#helpbook"/><text x="15" y="17" text-anchor="middle" class="ss" font-size="14" fill="#fff">?</text></svg></b>
    <i class="grip"></i>
  </div>

  <main class="workspace">
    <aside class="leftbar">
      <i class="hgrip"></i>
      <b class="lb"><svg><use href="#vadd"/></svg></b>
      <b class="lb"><svg><use href="#rasteradd"/></svg></b>
      <b class="lb"><svg><use href="#meshadd"/></svg></b>
      <b class="lb"><svg><use href="#commaadd"/></svg></b>
      <b class="lb"><svg><use href="#featheradd"/></svg></b>
      <b class="lb"><svg><use href="#veditadd"/></svg></b>
      <b class="lb"><svg><use href="#pgadd"/></svg><em></em></b>
      <b class="lb"><svg><use href="#wmsadd"/></svg><em></em></b>
      <b class="lb"><svg><use href="#wcsadd"/></svg></b>
      <b class="lb"><svg><use href="#wfsadd"/></svg><em></em></b>
      <b class="lb"><svg><use href="#vnew"/></svg><em></em></b>
    </aside>

    <section class="leftdocks">
      <div class="dock browser">
        <div class="dockhead"><span>Browser</span><span class="dockbtns"><svg><use href="#dockfloat"/></svg><svg><use href="#dockclose"/></svg></span></div>
        <div class="docktools">
          <b class="dt"><svg><use href="#addrect"/></svg></b><b class="dt"><svg><use href="#refresh"/></svg></b><b class="dt"><svg><use href="#filter"/></svg></b><b class="dt"><svg><use href="#collapse"/></svg></b><b class="dt"><svg><use href="#info"/></svg></b>
        </div>
        <ul class="tree browsertree">
          <li><i class="arr none"></i><svg><use href="#star"/></svg>Favorites</li>
          <li><i class="arr"></i><svg><use href="#bmsmall"/></svg>Spatial Bookmarks</li>
          <li><i class="arr"></i><svg><use href="#projhome"/></svg>Project Home</li>
          <li><i class="arr"></i><svg><use href="#homeic"/></svg>Home</li>
          <li><i class="arr"></i><svg><use href="#folderic"/></svg>/</li>
          <li><i class="arr none"></i><svg><use href="#gpkg"/></svg>GeoPackage</li>
          <li><i class="arr none"></i><svg><use href="#feather"/></svg>SpatiaLite</li>
          <li><i class="arr none"></i><svg><use href="#elephant"/></svg>PostGIS</li>
          <li><i class="arr none"></i><svg><use href="#mssql"/></svg>MSSQL</li>
          <li><i class="arr none"></i><svg viewBox="0 0 24 24"><use href="#db2"/><text x="12" y="15.500" text-anchor="middle" class="ss" font-size="9" fill="#e8f0f8">DB2</text></svg>DB2</li>
          <li><i class="arr none"></i><svg><use href="#globe"/></svg>WMS/WMTS</li>
          <li><i class="arr"></i><svg><use href="#globe"/></svg>XYZ Tiles</li>
          <li><i class="arr none"></i><svg><use href="#wcsi"/></svg>WCS</li>
          <li><i class="arr none"></i><svg><use href="#wfsi"/></svg>WFS</li>
          <li><i class="arr none"></i><svg><use href="#ows"/></svg>OWS</li>
          <li><i class="arr none"></i><svg><use href="#arcm"/></svg>ArcGisMapServer</li>
          <li><i class="arr none"></i><svg><use href="#arcf"/></svg>ArcGisFeatureServer</li>
          <li><i class="arr none"></i><svg><use href="#geonode"/></svg>GeoNode</li>
        </ul>
      </div>
      <div class="dock layers">
        <div class="dockhead"><span>Layers</span><span class="dockbtns"><svg><use href="#dockfloat"/></svg><svg><use href="#dockclose"/></svg></span></div>
        <div class="docktools">
          <b class="dt"><svg><use href="#brush"/></svg></b><b class="dt"><svg><use href="#addgroup"/></svg></b><b class="dt"><svg><use href="#eye"/></svg></b><b class="dt"><svg><use href="#filter"/></svg></b><b class="dt off"><svg><use href="#epsilon"/></svg></b><em class="dtcar"></em><b class="dt"><svg><use href="#expand"/></svg></b><b class="dt"><svg><use href="#collapse"/></svg></b><b class="dt"><svg><use href="#removerect"/></svg></b>
        </div>
        <div class="layerframe">
          <div class="layerbody">
            <div class="layerview">
              <ul class="legend">
                <li class="cls"><i class="sw s1"></i>756</li>
                <li class="cls"><i class="sw s2"></i>808</li>
                <li class="cls"><i class="sw s3"></i>860</li>
                <li class="cls"><i class="sw s4"></i>912</li>
                <li class="cls"><i class="sw s5"></i>960</li>
                <li class="cls"><i class="sw s6"></i>1000</li>
                <li class="lay"><i class="arr open"></i><i class="cb"></i><svg class="lic"><use href="#layerico"/></svg><span>numFiresPopulationIsInside_10000</span><i class="mark"></i></li>
                <li class="cls"><i class="sw s7"></i>0</li>
                <li class="cls"><i class="sw"></i>2</li>
                <li class="lay sel"><i class="arr open"></i><i class="cb"><svg><use href="#check"/></svg></i><svg class="lic"><use href="#layerico"/></svg><span>populationArchetypes_10000</span><i class="mark"></i></li>
                <li class="cls"><i class="sw b0"></i>0</li>
                <li class="cls"><i class="sw b1"></i>1282.58</li>
                <li class="cls"><i class="sw b2"></i>2565.16</li>
                <li class="cls"><i class="sw b3"></i>3847.74</li>
                <li class="cls"><i class="sw b4"></i>5130.32</li>
                <li class="cls"><i class="sw b5"></i>6412.9</li>
                <li class="cls"><i class="sw b6"></i>7695.48</li>
                <li class="cls"><i class="sw b7"></i>8879.4</li>
                <li class="cls"><i class="sw b8"></i>9866</li>
                <li class="lay"><i class="arr"></i><i class="cb"></i><svg class="lic"><use href="#layerico"/></svg><span>populationArchetypes_1000</span><i class="mark"></i></li>
                <li class="lay"><i class="arr"></i><i class="cb"></i><svg class="lic"><use href="#layerico"/></svg><span>population-archetypes</span><i class="mark"></i></li>
                <li class="lay"><i class="arr open"></i><i class="cb"></i><svg class="lic"><use href="#layerico"/></svg><span>numFiresInside_10000</span><i class="mark"></i></li>
              </ul>
            </div>
            <div class="vscroll">
              <i class="sbtn up"></i><i class="vt1"></i><i class="vt2"></i><i class="vt3"></i><i class="sbtn down"></i>
            </div>
          </div>
          <div class="hscroll">
            <i class="sbtn left"></i><i class="ht1"></i><i class="ht2"></i><i class="sbtn right"></i><i class="corner"></i>
          </div>
        </div>
      </div>
    </section>

    <section class="canvas">
      <svg class="map" viewBox="538 138 868 884" preserveAspectRatio="none">
        <defs>
          <filter id="rough" x="-5%" y="-5%" width="110%" height="110%" color-interpolation-filters="sRGB"><feTurbulence type="fractalNoise" baseFrequency=".09" numOctaves="3" seed="4" result="n"/><feDisplacementMap in="SourceGraphic" in2="n" scale="22" xChannelSelector="R" yChannelSelector="G"/></filter>
          <clipPath id="c11"><rect x="20" y="183" width="300" height="279"/></clipPath>
          <clipPath id="c12"><rect x="320" y="183" width="302" height="279"/></clipPath>
          <clipPath id="c13"><rect x="622" y="183" width="301" height="279"/></clipPath>
          <clipPath id="c14"><rect x="923" y="183" width="302" height="279"/></clipPath>
          <clipPath id="c21"><rect x="20" y="462" width="300" height="284"/></clipPath>
          <clipPath id="c22"><rect x="320" y="462" width="302" height="284"/></clipPath>
          <clipPath id="c23"><rect x="622" y="462" width="301" height="284"/></clipPath>
          <clipPath id="c24"><rect x="923" y="462" width="302" height="284"/></clipPath>
          <clipPath id="c31"><rect x="20" y="746" width="300" height="282"/></clipPath>
          <clipPath id="c32"><rect x="320" y="746" width="302" height="282"/></clipPath>
          <clipPath id="c33"><rect x="622" y="746" width="301" height="282"/></clipPath>
          <clipPath id="c34"><rect x="923" y="746" width="302" height="282"/></clipPath>
          <clipPath id="c35"><rect x="1225" y="746" width="300" height="282"/></clipPath>
          <g id="fire" filter="url(#rough)">
            <path d="M395 33h15l-5 27 15-15 17-7-7 42-15 40-20 40-15 35-10 20 7 25-12 25-25 35-20 25-20 20-12 35-6 35 23 15-5 30 62 10-2 35 25 40 20-25-3 40-17 40-25 40-30 10-15 20-25-15-25-35-15-40-15-70-20-50-10-40v-65l20 17 15-17 5-35 20-60 20-50 33-10 7-25 20-55 25-60z"/>
            <path d="M690 462l30-102 18-5-3 45 15-5 20-50 20-25 53 65-13 35-30 45-25 75-25 30v30l-45 30-10 20-25 5-25-45-3-40 8-25-5-35 30-10z"/>
            <path d="M893 462l32-22 25-15 5 45-30 90 25-30 20-20 30-10 15-22 15 12 10 70 35-70 37-68 13 48-15 50-35 90-35 70-20 40 55-5 35-35 45-75 5 35-15 40 45-8 5 23 20-40 25 5 40-50 30-5 8 20-28 65-20 55 42-10-12 45-30 50-30 70-50 60-25 30-10 40 15 10-5 35-25 25v45l25-15 45-90 25-22 20 67 15 10 30-115 35-95 27-5 13 20-45 100-30 70-40 50-70 95-30 25 55-5 10 75-20 45-25 25-75 95-65-30-50-40-25-65-55-65-30-35-20-70-10-70-30-70-20-45-50-25v-80l-25-80 10-55-15-65 30-20 30 20 35-40 10-30 35-50 15-40z"/>
          </g>
          <path id="white" filter="url(#rough)" d="M925 590l40 35 40 55 30 65 25 20 60-20-45 70 10 10 45-50h30l40-30 35-80 20-5-5 50-15 35-10 55-10 80-15 45-35 50-10 55 15 10-5 35-25 25v45l25-15 45-90 25-22 20 67-70 115-25 40 55-5 10 75-20 45-30-10-45-70-80-60-30-65-45-55-45-45-25-20-7-2 7-68-20-80-20-80-5-40 15-40 15-60 33-25z"/>
          <path id="holes" d="M1110 825l-5 45-20 5 10-25zM325 245h4v25h-4zM990 1195h8v25h-8zM1085 1300h10v15h-10zM895 1055h8v20h-8zM360 160h20l-5 10h-15zM285 590h8v8h-8zM1130 845h8v30h-8zM1130 1425h8v8h-8z"/>
          <path id="speck" d="M695 565h6v6h-6zM765 433h6v6h-6zM728 550h6v6h-6zM845 620h8v6h-8zM845 710h6v14h-6zM775 680h6v14h-6zM815 973h20v4h-20zM855 960h6v6h-6zM880 925h6v6h-6zM962 715h8v8h-8zM945 908h8v8h-8zM937 940h5v12h-5zM1120 955h5v6h-5zM1070 1185h5v10h-5zM1165 1170h5v10h-5z"/>
        </defs>
        <rect class="canvasbg" x="538" y="138" width="868" height="884"/>
        <rect class="tintstrip" x="1286" y="169" width="86" height="831"/>
        <rect class="blackbar" x="658" y="160" width="628" height="9"/>
        <svg x="658" y="169" width="628" height="831" viewBox="658 169 628 831">
        <rect class="basegray" x="658" y="169" width="628" height="831"/>
        <g transform="translate(650 330) scale(.3954 .4209)">
          <use href="#fire" fill="#c5c7cb"/><use href="#white" fill="#fcfdff"/><use href="#holes" fill="#939497"/><use href="#speck" fill="#a9abb0"/>
          <g clip-path="url(#c11)"><rect x="20" y="183" width="300" height="279" fill="#929698"/><use href="#fire" fill="#c4c7cb"/></g>
          <g clip-path="url(#c12)"><rect x="320" y="183" width="302" height="279" fill="#919698"/><use href="#fire" fill="#c3c7cb"/></g>
          <g clip-path="url(#c13)"><rect x="622" y="183" width="301" height="279" fill="#8d9597"/><use href="#fire" fill="#c1c6c9"/></g>
          <g clip-path="url(#c14)"><rect x="923" y="183" width="302" height="279" fill="#919598"/><use href="#fire" fill="#c3c6ca"/></g>
          <g clip-path="url(#c21)"><rect x="20" y="462" width="300" height="284" fill="#8b9299"/><use href="#fire" fill="#bcc4cb"/></g>
          <g clip-path="url(#c22)"><rect x="320" y="462" width="302" height="284" fill="#7f8b94"/><use href="#fire" fill="#b0bdc7"/></g>
          <g clip-path="url(#c23)"><rect x="622" y="462" width="301" height="284" fill="#001a42"/><use href="#fire" fill="#344a70"/><use href="#white" fill="#6c83a9"/><use href="#speck" fill="#001a42"/></g>
          <g clip-path="url(#c24)"><rect x="923" y="462" width="302" height="284" fill="#91959a"/><use href="#fire" fill="#c3c6ca"/><use href="#white" fill="#fcfdff"/><use href="#speck" fill="#c3c6ca"/></g>
          <g clip-path="url(#c31)"><rect x="20" y="746" width="300" height="282" fill="#8f9599"/></g>
          <g clip-path="url(#c32)"><rect x="320" y="746" width="302" height="282" fill="#848c94"/></g>
          <g clip-path="url(#c33)"><rect x="622" y="746" width="301" height="282" fill="#637986"/><use href="#fire" fill="#95adba"/><use href="#white" fill="#c9e2ef"/><use href="#speck" fill="#637986"/></g>
          <g clip-path="url(#c34)"><rect x="923" y="746" width="302" height="282" fill="#8a9aa5"/><use href="#fire" fill="#bcc9d1"/><use href="#white" fill="#e9f2fa"/><use href="#holes" fill="#8a9aa5"/><use href="#speck" fill="#b5c5d0"/></g>
          <g clip-path="url(#c35)"><rect x="1225" y="746" width="300" height="282" fill="#909598"/><use href="#fire" fill="#c1c5c9"/></g>
        </g>
        </svg>
      </svg>
    </section>

    <aside class="rightdock">
      <div class="dockhead rhead"><span>Identify Results</span><span class="dockbtns"><svg><use href="#dockfloat"/></svg><svg><use href="#dockclose"/></svg></span></div>
      <div class="docktools rtools">
        <b class="rt off"><svg><use href="#treeform"/></svg></b><i class="rsep"></i><b class="rt"><svg><use href="#expand"/></svg></b><b class="rt"><svg><use href="#collapse"/></svg></b><b class="rt"><svg><use href="#starexp"/></svg></b><i class="rsep"></i><b class="rt"><svg><use href="#deselect"/></svg></b><i class="rsep"></i><b class="rt off"><svg><use href="#copyd"/></svg></b><b class="rt off"><svg><use href="#printer"/></svg></b><i class="rsep"></i><b class="rt"><svg><use href="#idsel"/></svg></b><em class="dtcar"></em><b class="rt"><svg><use href="#wrench"/></svg></b>
      </div>
      <div class="results">
        <div class="rrow rheader"><span class="c1">Feature</span><span class="c2">Value</span></div>
        <div class="rrow"><span class="c1 ind1"><i class="arr open grayarr"></i>0</span><span class="c2">populationArchetypes_10000</span></div>
        <div class="rrow rsel"><span class="c1 ind2"><i class="arr open"></i>populationArchetype…</span></div>
        <div class="rrow"><span class="c1 ind3">Band 1</span><span class="c2">296</span></div>
        <div class="rrow ralt"><span class="c1 ind3"><i class="arr derived"></i>(Derived)</span></div>
      </div>
      <div class="modeline">
        <label class="lbl">Mode</label><div class="combo modecombo">Current layer<em></em></div>
      </div>
      <div class="viewline">
        <label class="lbl">View</label><div class="combo viewcombo">Tree<em></em></div><button class="help">Help</button>
      </div>
    </aside>
  </main>

  <footer class="statusbar">
    <div class="locator"><svg><use href="#search"/></svg><span>Type to locate (Ctrl+K)</span></div>
    <div class="statusright">
      <span class="st-coord">Coordinate</span>
      <div class="field f-coord">2398892,2485760</div>
      <svg class="st-i nocrs"><use href="#nocrs"/></svg>
      <span class="st-scale">Scale</span>
      <div class="field f-scale">1:317930<em></em></div>
      <svg class="st-i lockic"><use href="#lock"/></svg>
      <span class="st-mag">Magnifier</span>
      <div class="field f-spin f-mag">100%<i class="spin"></i></div>
      <span class="st-rot">Rotation</span>
      <div class="field f-spin f-rot">0.0 °<i class="spin"></i></div>
      <i class="cb st-cb"><svg><use href="#check"/></svg></i>
      <span class="st-render">Render</span>
      <svg class="st-i crsic"><use href="#crs"/></svg>
      <span class="st-epsg">EPSG:3111</span>
      <svg class="st-i msgic"><use href="#msg"/></svg>
    </div>
  </footer>
</div>
</body>
</html>
```
FILE: styles.css
```css
* { box-sizing: border-box; }
html, body { margin: 0; padding: 0; }
body { width: 1850px; height: 1055px; overflow: hidden; font-family: "Noto Sans", "Open Sans", sans-serif; font-size: 14.5px; color: #111; background: #efefef; }
.defs { position: absolute; }
.ss { font-family: "Liberation Sans", sans-serif; }
.se { font-family: "Liberation Serif", serif; }
.b { font-weight: 700; }
ul { list-style: none; margin: 0; padding: 0; }
u { text-underline-offset: 2px; }
em { font-style: normal; }

.app { width: 1850px; height: 1055px; display: flex; flex-direction: column; border: 1px solid #c8c8c8; border-width: 1px 1px 0 1px; }

.titlebar { height: 37px; flex: none; display: flex; align-items: center; background: #312f2f; border-bottom: 1px solid #1b1b1b; position: relative; }
.title { width: 100%; text-align: center; color: #e8e8e8; font-weight: 600; font-size: 14.7px; }
.winctl { position: absolute; right: 0; top: 0; height: 36px; display: flex; align-items: center; }
.win-min { width: 8px; height: 2px; background: #fff; margin-right: 29px; }
.win-max { width: 8px; height: 8px; border: 1px solid #aaa; border-left: 0; border-bottom: 0; position: relative; margin-right: 19px; }
.win-max i { position: absolute; left: -3px; top: 2px; width: 7px; height: 7px; border: 1px solid #fff; background: #312f2f; }
.win-close { width: 18px; height: 18px; border-radius: 50%; background: #ee5a24; color: #fff; font-size: 11px; line-height: 18px; text-align: center; margin-right: 9px; }

.menubar { height: 22px; flex: none; display: flex; align-items: center; gap: 14.8px; padding: 0 0 2px 10px; background: #efefef; border-bottom: 1px solid #d6d6d6; }

.toolbar { flex: none; height: 39px; display: flex; align-items: center; background: linear-gradient(#f4f4f4, #ebebeb); border-bottom: 1px solid #c6c6c6; }
.toolbar.t2 { border-bottom: 2px solid #bdbdbd; }
.grip { width: 17px; height: 22px; flex: none; position: relative; }
.grip::before, .grip::after { content: ""; position: absolute; top: 0; width: 3px; height: 100%; background: radial-gradient(circle, #b4b4b4 .8px, transparent 1px) 0 0 / 3px 3px repeat-y; }
.grip::before { left: 5px; }
.grip::after { left: 8px; }
.g13 { width: 13px; }
.g15 { width: 15.5px; }
.g13::before { left: 3px; }
.g13::after { left: 6px; }
.sep { width: 7px; height: 26px; flex: none; border-left: 1px solid #c4c4c4; margin-left: 3px; margin-right: -3px; }
.tb { width: 32.9px; height: 30px; flex: none; display: flex; align-items: center; justify-content: center; position: relative; }
.tb svg { width: 24px; height: 24px; display: block; }
.tb.narrow { width: 31.5px; }
.tb.drop { width: 45.5px; justify-content: flex-start; padding-left: 4.5px; }
.tb.drop em, .lb em, .dtcar { width: 0; height: 0; border: 4px solid transparent; border-top: 4px solid #666; border-bottom: 0; display: block; }
.tb.drop em { margin-left: 5px; }
.tb.off svg { opacity: .42; filter: grayscale(.6); }
.tb.drop.off em { opacity: .35; }
.tb.active { background: #d9d9d9; border: 1px solid #aaa; border-radius: 3px; width: 31px; height: 31px; }

.workspace { flex: 1; min-height: 0; display: flex; }

.leftbar { width: 52px; flex: none; display: flex; flex-direction: column; align-items: flex-start; border-right: 1px solid #c6c6c6; background: #efefef; padding-top: 5px; }
.hgrip { width: 16px; height: 4px; margin: 0 0 3px 20px; background: radial-gradient(circle, #b8b8b8 .8px, transparent 1px) 0 0 / 3px 2px; flex: none; }
.lb { height: 31.9px; width: 51px; flex: none; display: flex; align-items: center; position: relative; padding-left: 8px; }
.lb svg { width: 24px; height: 24px; display: block; }
.lb em { position: absolute; left: 39px; top: 17px; }

.leftdocks { width: 485px; flex: none; display: flex; flex-direction: column; }
.dock { display: flex; flex-direction: column; width: 480px; }
.browser { height: 403px; }
.layers { height: 482px; }
.dockhead { height: 22px; flex: none; display: flex; align-items: center; justify-content: space-between; padding: 0 2px 0 4px; }
.browser .dockhead { height: 20px; padding-bottom: 2px; }
.dockbtns { display: flex; gap: 2px; }
.dockbtns svg { width: 12px; height: 12px; display: block; }
.docktools { height: 28px; flex: none; display: flex; align-items: center; padding-left: 3.5px; }
.browser .docktools { margin-bottom: 2px; }
.dt { width: 25px; height: 24px; flex: none; display: flex; align-items: center; justify-content: center; }
.dt svg { width: 16px; height: 16px; display: block; }
.dt.off svg { opacity: .35; }
.dtcar { margin: 0 5px 0 -1px; opacity: .4; }

.tree { background: #fff; border: 1px solid #b9b9b9; }
.browsertree { height: 349px; }
.browsertree li { height: 19px; display: flex; align-items: center; white-space: nowrap; }
.browsertree li:first-child { margin-top: -1px; }
.browsertree svg { width: 16px; height: 16px; flex: none; margin-right: 5px; }
.arr { width: 0; height: 0; flex: none; border: 4px solid transparent; border-left: 4px solid #555; border-right: 0; margin: 0 12px 0 8px; display: block; }
.arr.none { border-left-color: transparent; }
.arr.open { border: 4px solid transparent; border-top: 4px solid #555; border-bottom: 0; margin: 0 9px 0 6px; }

.layerframe { height: 429px; border: 1px solid #b9b9b9; background: #fff; display: flex; flex-direction: column; flex: none; margin-top: 2px; }
.layerbody { flex: 1; min-height: 0; display: flex; }
.layerview { flex: 1; min-width: 0; overflow: hidden; }
.legend { margin-top: -8px; }
.legend li { height: 19px; display: flex; align-items: center; white-space: nowrap; }
.cls { padding-left: 43px; }
.sw { width: 16px; height: 16px; margin-right: 6px; flex: none; }
.s1 { background: #a3d99d; } .s2 { background: #74c476; } .s3 { background: #41ab5d; } .s4 { background: #238b45; } .s5 { background: #006d2c; } .s6 { background: #00441b; } .s7 { background: #000; }
.b0 { background: #f7fbff; } .b1 { background: #deebf7; } .b2 { background: #c6dbef; } .b3 { background: #9ecae1; } .b4 { background: #6baed6; } .b5 { background: #4292c6; } .b6 { background: #2171b5; } .b7 { background: #08519c; } .b8 { background: #08306b; }
.lay .arr { margin: 0 11px 0 8px; }
.lay .arr.open { margin: 0 9px 0 6px; }
.cb { width: 14px; height: 14px; flex: none; border: 1px solid #aaa; background: #fff; border-radius: 1px; display: flex; align-items: center; justify-content: center; margin-right: 7px; }
.cb svg { width: 12px; height: 12px; display: block; }
.lic { width: 13px; height: 13px; flex: none; margin-right: 8px; }
.lay span { font-style: italic; font-weight: 600; color: #737373; font-size: 15.2px; }
.mark { width: 4px; height: 17px; background: #e6e6e6; margin-left: auto; margin-right: 1px; flex: none; }
.lay.sel { background: #308cc6; }
.lay.sel span { color: #fff; text-decoration: underline; font-style: normal; font-size: 15px; }
.lay.sel .arr.open { border-top-color: #17405e; }
.lay.sel .mark { background: #cfe3f1; }

.vscroll { width: 14px; flex: none; border-left: 1px solid #c9c9c9; display: flex; flex-direction: column; background: #e4e4e4; }
.vt1 { height: 131px; flex: none; background: #e4e4e4; }
.vt2 { height: 103px; flex: none; background: #fbfbfb; border-top: 1px solid #ccc; border-bottom: 1px solid #ccc; }
.vt3 { flex: 1; background: #e4e4e4; }
.sbtn { display: block; flex: none; position: relative; background: #f3f3f3; }
.sbtn::after { content: ""; position: absolute; width: 0; height: 0; border: 4px solid transparent; left: 50%; top: 50%; margin: -3px 0 0 -4px; }
.sbtn.up, .sbtn.down { height: 14px; }
.sbtn.left, .sbtn.right { width: 14px; }
.sbtn.up::after { border-bottom: 4px solid #555; border-top: 0; }
.sbtn.down::after { border-top: 4px solid #555; border-bottom: 0; }
.sbtn.left::after { border-right: 4px solid #555; border-left: 0; margin: -4px 0 0 -3px; }
.sbtn.right::after { border-left: 4px solid #555; border-right: 0; margin: -4px 0 0 -1px; }
.hscroll { height: 14px; flex: none; display: flex; border-top: 1px solid #bdbdbd; }
.ht1 { width: 329px; flex: none; background: #fbfbfb; border-right: 1px solid #ccc; border-left: 1px solid #ccc; }
.ht2 { flex: 1; background: #e4e4e4; }
.corner { width: 14px; flex: none; background: #efefef; border-left: 1px solid #c9c9c9; }

.canvas { width: 868px; flex: none; background: #fff; }
.map { width: 868px; height: 884px; display: block; }
.canvasbg { fill: #fff; }
.tintstrip { fill: #fafbff; }
.blackbar { fill: #000; }
.basegray { fill: #939497; }

.rightdock { width: 442px; flex: none; padding-left: 7px; display: flex; flex-direction: column; }
.rhead { height: 20px; padding: 0 1px 2px 3px; }
.rtools { height: 28px; padding-left: 3.5px; margin-bottom: 3px; }
.rt { width: 25px; height: 24px; flex: none; display: flex; align-items: center; justify-content: center; }
.rt svg { width: 16px; height: 16px; display: block; }
.rt.off svg { opacity: .5; }
.rsep { width: 1px; height: 16px; background: #ccc; margin: 0 3.5px; flex: none; }
.results { height: 765px; flex: none; border: 1px solid #b9b9b9; background: #fff; font-size: 14.7px; }
.rrow { display: flex; height: 17px; align-items: center; white-space: nowrap; }
.rheader { height: 19px; background: #f4f4f4; border-bottom: 1px solid #c9c9c9; }
.rheader .c1 { width: 212px; border-right: 1px solid #ccc; height: 100%; padding-left: 2px; display: flex; align-items: center; }
.rheader .c2 { padding-left: 3px; }
.rrow .c1 { width: 212px; flex: none; display: flex; align-items: center; }
.rrow .c2 { padding-left: 4px; }
.ind1 .arr.open { margin: 0 9px 0 6px; }
.ind2 { padding-left: 24px; }
.ind2 .arr.open { margin: 0 11px 0 0; border-top-color: #17405e; }
.ind3 { padding-left: 63px; }
.rsel { background: #308cc6; color: #cfe6f5; }
.ralt { background: #f7f7f7; }
.arr.derived { margin: 0 11px 0 -15px; }
.grayarr { border-top-color: #888 !important; }

.modeline { height: 24px; flex: none; display: flex; align-items: center; margin-top: 6px; padding-left: 4px; }
.viewline { height: 25px; flex: none; display: flex; align-items: center; margin-top: 6px; padding-left: 4px; }
.lbl { width: 46px; flex: none; }
.viewline .lbl { width: 40px; }
.combo { height: 24px; border: 1px solid #c2c2c2; border-radius: 3px; background: linear-gradient(#fafafa, #efefef); display: flex; align-items: center; padding-left: 4px; position: relative; flex: none; }
.combo em, .f-scale em { position: absolute; right: 7px; top: 9px; width: 0; height: 0; border: 4px solid transparent; border-top: 5px solid #666; border-bottom: 0; }
.modecombo { width: 379px; }
.viewcombo { width: 85px; }
.help { margin-left: auto; margin-right: 6px; width: 45px; height: 25px; border: 1px solid #bdbdbd; border-radius: 3px; background: linear-gradient(#fafafa, #efefef); font: inherit; color: #111; padding: 0; }

.statusbar { height: 32px; flex: none; display: flex; align-items: center; background: #efefef; border-top: 1px solid #c8c8c8; font-size: 12.2px; }
.locator { width: 274px; height: 24px; margin-left: 4px; background: #fff; border: 1px solid #c2c2c2; border-radius: 3px; display: flex; align-items: center; padding-left: 8px; font-size: 14.6px; color: #6e6e6e; flex: none; }
.locator svg { width: 14px; height: 14px; margin-right: 7px; }
.statusright { margin-left: auto; display: flex; align-items: center; height: 100%; width: 904px; flex: none; }
.field { height: 23px; background: #fff; border: 1px solid #c2c2c2; border-radius: 3px; display: flex; align-items: center; position: relative; flex: none; padding-left: 4px; }
.st-i { width: 16px; height: 16px; flex: none; }
.st-coord { width: 61px; flex: none; }
.f-coord { width: 132px; margin-left: 4px; justify-content: center; padding-left: 0; }
.nocrs { margin-left: 4px; }
.st-scale { margin-left: 14px; width: 33px; flex: none; }
.f-scale { width: 95px; }
.f-scale em { right: 6px; }
.f-scale::after { content: ""; position: absolute; right: 20px; top: 0; bottom: 0; border-left: 1px solid #ccc; }
.lockic { margin-left: 11px; }
.st-mag { margin-left: 7px; width: 56px; flex: none; }
.f-mag { width: 91px; }
.st-rot { margin-left: 10px; width: 57px; flex: none; }
.f-rot { width: 95px; }
.spin { position: absolute; right: 0; top: 0; bottom: 0; width: 14px; border-left: 1px solid #ccc; background: linear-gradient(#888 0 0) 3px 10px / 8px 1px no-repeat; }
.spin::before, .spin::after { content: ""; position: absolute; left: 3px; width: 0; height: 0; border: 4px solid transparent; }
.spin::before { top: 3px; border-bottom: 4px solid #666; border-top: 0; }
.spin::after { bottom: 3px; border-top: 4px solid #666; border-bottom: 0; }
.st-cb { margin-left: 6px; margin-right: 6px; }
.st-render { width: 42px; flex: none; }
.crsic { margin-left: 13px; width: 15px; height: 15px; }
.st-epsg { width: 60px; flex: none; margin-left: 2px; }
.msgic { margin-left: 22px; }
```
